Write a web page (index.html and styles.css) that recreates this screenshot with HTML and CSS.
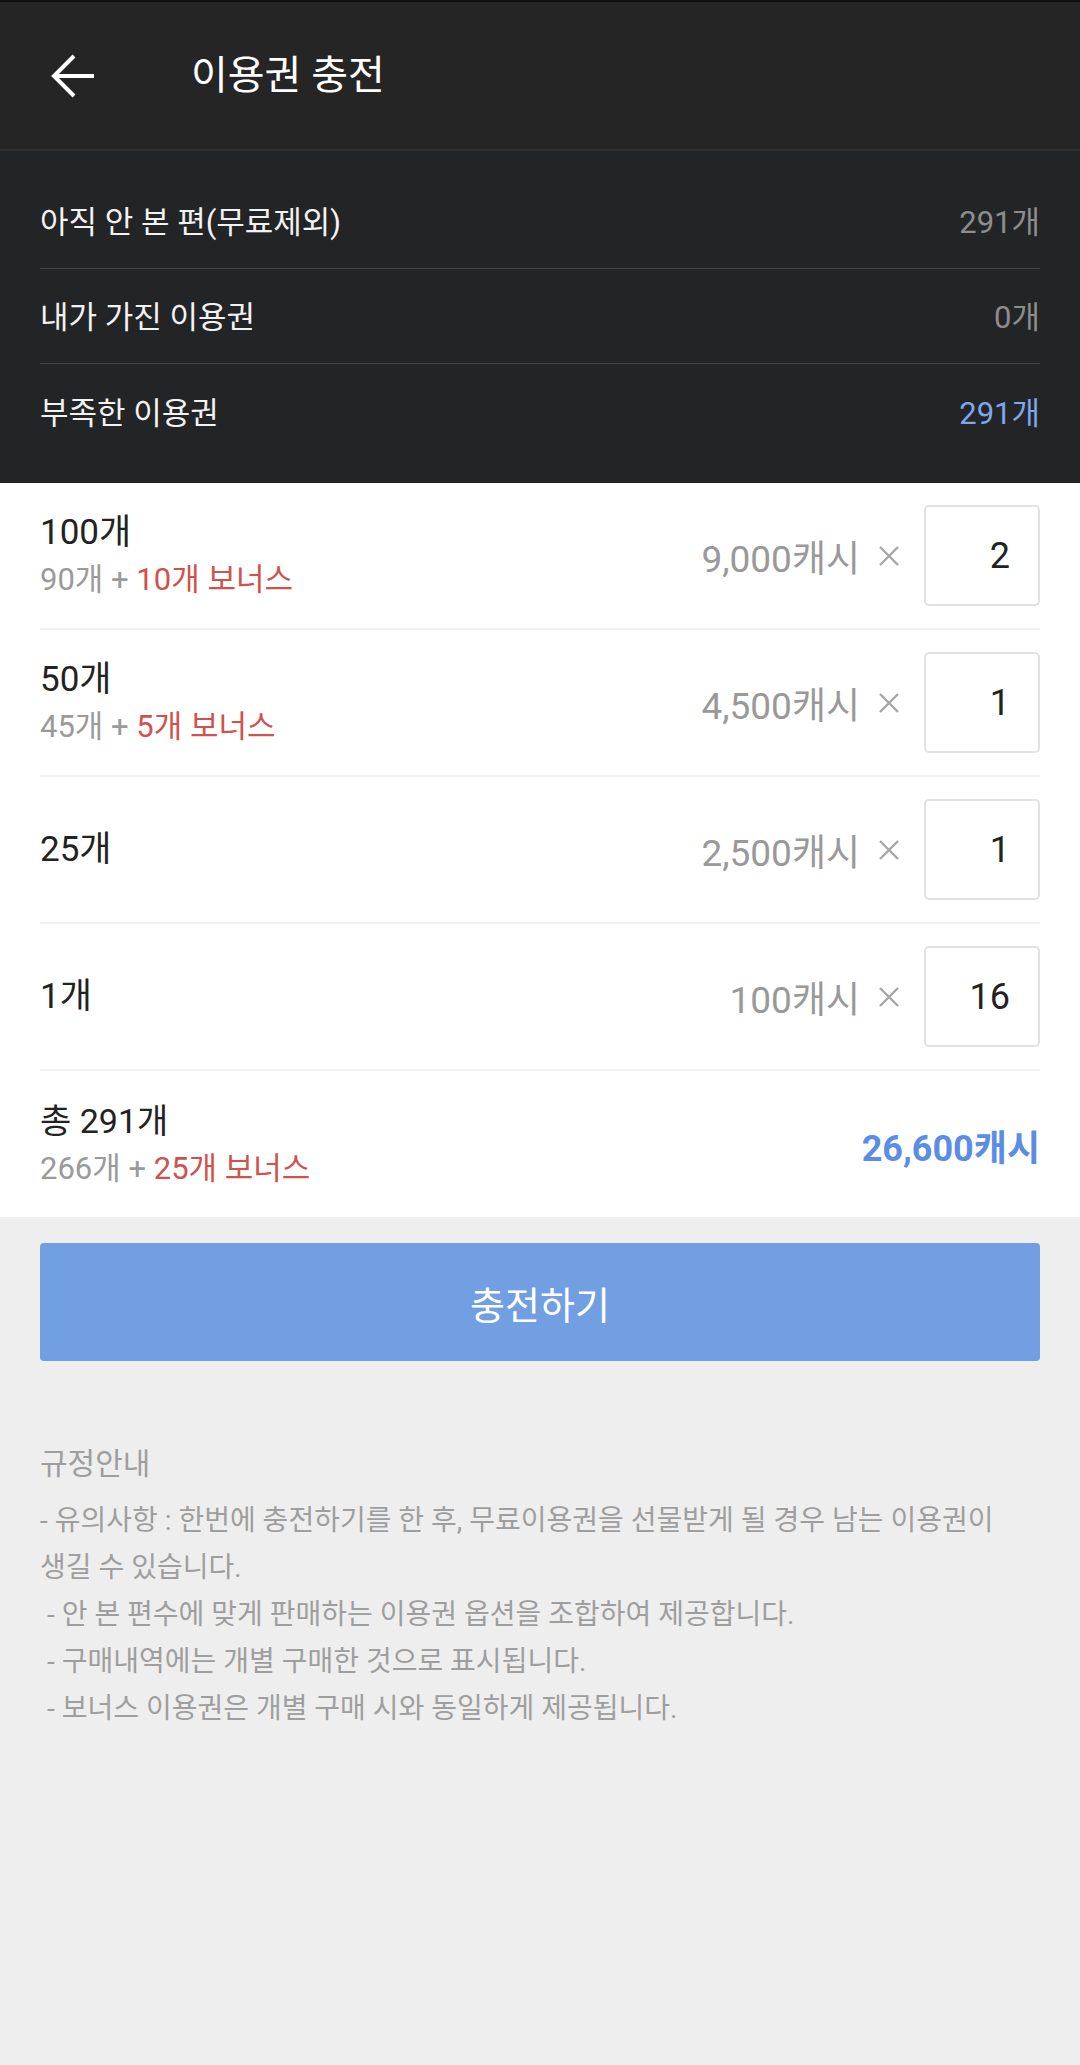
FILE: index.html
```html
<!DOCTYPE html>
<html lang="ko">
<head>
<meta charset="utf-8">
<title>이용권 충전</title>
<link rel="stylesheet" href="styles.css">
</head>
<body>
<div class="page">
  <header class="appbar">
    <svg class="back" width="44" height="44" viewBox="0 0 44 44" aria-hidden="true">
      <path d="M3 22 H43 M23 2 L3 22 L23 42" fill="none" stroke="#ffffff" stroke-width="4" stroke-linecap="butt" stroke-linejoin="miter"/>
    </svg>
    <h1 class="appbar-title">이용권 충전</h1>
  </header>

  <section class="summary">
    <div class="summary-row">
      <span class="summary-label">아직 안 본 편(무료제외)</span>
      <span class="summary-value">291개</span>
    </div>
    <div class="summary-row">
      <span class="summary-label">내가 가진 이용권</span>
      <span class="summary-value">0개</span>
    </div>
    <div class="summary-row">
      <span class="summary-label">부족한 이용권</span>
      <span class="summary-value blue">291개</span>
    </div>
  </section>

  <section class="items">
    <div class="item">
      <div class="item-info">
        <div class="item-title">100개</div>
        <div class="item-sub">90개 + <span class="bonus">10개 보너스</span></div>
      </div>
      <div class="item-price">9,000캐시</div>
      <svg class="times" width="22" height="22" viewBox="0 0 22 22" aria-hidden="true"><path d="M2 2 L20 20 M20 2 L2 20" stroke="#a6a6a6" stroke-width="2.4" fill="none"/></svg>
      <div class="qty">2</div>
    </div>
    <div class="item">
      <div class="item-info">
        <div class="item-title">50개</div>
        <div class="item-sub">45개 + <span class="bonus">5개 보너스</span></div>
      </div>
      <div class="item-price">4,500캐시</div>
      <svg class="times" width="22" height="22" viewBox="0 0 22 22" aria-hidden="true"><path d="M2 2 L20 20 M20 2 L2 20" stroke="#a6a6a6" stroke-width="2.4" fill="none"/></svg>
      <div class="qty">1</div>
    </div>
    <div class="item">
      <div class="item-info">
        <div class="item-title">25개</div>
      </div>
      <div class="item-price">2,500캐시</div>
      <svg class="times" width="22" height="22" viewBox="0 0 22 22" aria-hidden="true"><path d="M2 2 L20 20 M20 2 L2 20" stroke="#a6a6a6" stroke-width="2.4" fill="none"/></svg>
      <div class="qty">1</div>
    </div>
    <div class="item">
      <div class="item-info">
        <div class="item-title">1개</div>
      </div>
      <div class="item-price">100캐시</div>
      <svg class="times" width="22" height="22" viewBox="0 0 22 22" aria-hidden="true"><path d="M2 2 L20 20 M20 2 L2 20" stroke="#a6a6a6" stroke-width="2.4" fill="none"/></svg>
      <div class="qty">16</div>
    </div>
    <div class="total">
      <div class="item-info">
        <div class="item-title">총 291개</div>
        <div class="item-sub">266개 + <span class="bonus">25개 보너스</span></div>
      </div>
      <div class="total-price">26,600캐시</div>
    </div>
  </section>

  <div class="action">
    <button class="charge-btn" type="button">충전하기</button>
  </div>

  <section class="guide">
    <h2 class="guide-title">규정안내</h2>
    <p class="guide-text">- 유의사항 : 한번에 충전하기를 한 후, 무료이용권을 선물받게 될 경우 남는 이용권이 생길 수 있습니다.</p>
    <p class="guide-text indent">- 안 본 편수에 맞게 판매하는 이용권 옵션을 조합하여 제공합니다.</p>
    <p class="guide-text indent">- 구매내역에는 개별 구매한 것으로 표시됩니다.</p>
    <p class="guide-text indent">- 보너스 이용권은 개별 구매 시와 동일하게 제공됩니다.</p>
  </section>
</div>
</body>
</html>
```

FILE: styles.css
```css
* {
  box-sizing: border-box;
}

html, body {
  margin: 0;
  padding: 0;
}

body {
  background: #eeeeee;
  font-family: Roboto, "Noto Sans CJK KR", "Noto Sans", sans-serif;
  width: 1080px;
  min-height: 2065px;
}

.page {
  width: 1080px;
}

/* App bar */
.appbar {
  height: 151px;
  background: #252525;
  border-top: 2px solid #0e0e0e;
  border-bottom: 2px solid #2f3032;
  display: flex;
  align-items: center;
  padding-left: 51px;
}

.back {
  display: block;
  flex: none;
}

.appbar-title {
  margin: 0 0 0 96px;
  font-size: 40px;
  font-weight: 400;
  color: #ffffff;
  line-height: 48px;
}

/* Summary */
.summary {
  background: #232426;
  padding: 23px 40px 24px;
}

.summary-row {
  height: 95px;
  display: flex;
  align-items: center;
  justify-content: space-between;
  border-bottom: 1px solid #434446;
  padding-bottom: 3px;
}

.summary-row:last-child {
  border-bottom: none;
}

.summary-label {
  font-size: 31px;
  color: #f2f2f2;
}

.summary-value {
  font-size: 31px;
  color: #8d8d8d;
}

.summary-value.blue {
  color: #7fa6ea;
}

/* Items */
.items {
  background: #ffffff;
  padding: 0 40px;
}

.item {
  display: flex;
  align-items: center;
  padding: 22px 0;
  border-bottom: 2px solid #f1f1f1;
}

.item-info {
  flex: 1;
  display: flex;
  flex-direction: column;
}

.item-title {
  font-size: 35px;
  line-height: 47px;
  color: #222222;
}

.item-sub {
  font-size: 31px;
  line-height: 47px;
  color: #9a9a9a;
}

.total .item-title {
  font-size: 34px;
}

.bonus {
  color: #d0524e;
}

.item-price {
  font-size: 37px;
  color: #999999;
}

.times {
  display: block;
  flex: none;
  margin: 0 24px 0 18px;
}

.qty {
  width: 116px;
  height: 101px;
  border: 2px solid #e2e2e2;
  border-radius: 5px;
  display: flex;
  align-items: center;
  justify-content: flex-end;
  padding-right: 28px;
  font-size: 36px;
  color: #222222;
}

.total {
  display: flex;
  align-items: center;
  height: 146px;
  padding-top: 2px;
}

.total-price {
  font-size: 36px;
  font-weight: 700;
  color: #5b8de4;
}

/* Button */
.action {
  padding: 26px 40px 0;
}

.charge-btn {
  display: block;
  width: 100%;
  height: 118px;
  border: none;
  border-radius: 4px;
  background: #729fe1;
  color: #ffffff;
  font-family: inherit;
  font-size: 38px;
  padding: 0;
}

/* Guide */
.guide {
  padding: 80px 40px 0;
}

.guide-title {
  margin: 0 0 10px;
  font-size: 30px;
  font-weight: 400;
  line-height: 46px;
  color: #9e9e9e;
}

.guide-text {
  margin: 0;
  font-size: 28px;
  line-height: 47px;
  color: #9e9e9e;
  word-break: keep-all;
}

.guide-text.indent {
  padding-left: 7px;
}
```
